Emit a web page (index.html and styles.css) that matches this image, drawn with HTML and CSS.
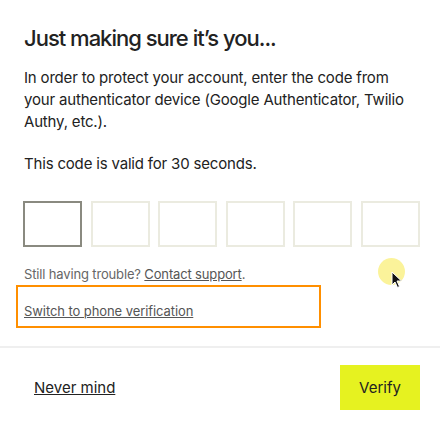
FILE: index.html
```html
<!DOCTYPE html>
<html lang="en">
<head>
    <meta charset="UTF-8">
    <meta name="viewport" content="width=device-width, initial-scale=1.0">
    <title>Verify it's you</title>
    <link rel="stylesheet" href="styles.css">
</head>
<body>
    <div class="dialog">
        <div class="content">
            <h1>Just making sure it’s you...</h1>
            <p class="intro">In order to protect your account, enter the code from your authenticator device (Google Authenticator, Twilio Authy, etc.).</p>
            <p class="valid">This code is valid for 30 seconds.</p>
            <div class="code-row">
                <input class="code-box active" maxlength="1">
                <input class="code-box" maxlength="1">
                <input class="code-box" maxlength="1">
                <input class="code-box" maxlength="1">
                <input class="code-box" maxlength="1">
                <input class="code-box" maxlength="1">
            </div>
            <p class="help">Still having trouble? <a href="#">Contact support</a>.</p>
            <div class="switch">
                <a href="#">Switch to phone verification</a>
            </div>
        </div>
        <div class="footer">
            <a class="cancel" href="#">Never mind</a>
            <button class="verify">Verify</button>
        </div>
    </div>
    <div class="cursor-dot"></div>
    <svg class="cursor" width="12" height="18" viewBox="0 0 12 18">
        <path d="M1 1 L1 14 L4 11 L6.5 16.5 L8.5 15.5 L6 10 L10.5 10 Z" fill="#111" stroke="#fff" stroke-width="1"/>
    </svg>
</body>
</html>
```

FILE: styles.css
```css
body {
    margin: 0;
    background: #fff;
    font-family: Inter, "Noto Sans", Arial, sans-serif;
    color: #222;
}
.content {
    padding: 24px 20px 18px 24px;
}
h1 {
    margin: 0 0 15px;
    font-size: 22px;
    line-height: 28px;
    font-weight: 450;
    letter-spacing: -1px;
}
.intro, .valid {
    margin: 0;
    font-size: 15px;
    line-height: 22px;
    letter-spacing: -0.18px;
}
.valid {
    margin-top: 20px;
}
.code-row {
    display: flex;
    gap: 8.6px;
    margin: 26px 0 0 -1px;
}
.code-box {
    width: 59px;
    height: 46px;
    box-sizing: border-box;
    border: 2px solid #ebebe0;
    border-radius: 0;
    padding: 0;
    outline: none;
}
.code-box.active {
    border-color: #8a8a80;
}
.help {
    margin: 17px 0 0;
    font-size: 13px;
    line-height: 20px;
    letter-spacing: -0.15px;
    color: #666;
}
.help a, .switch a {
    color: #555;
}
.switch {
    width: 305px;
    box-sizing: border-box;
    margin: 1px 0 0 -8px;
    padding: 14px 6px 5px;
    border: 2px solid #ff8f00;
    font-size: 13px;
    line-height: 20px;
    letter-spacing: -0.08px;
}
.footer {
    display: flex;
    justify-content: space-between;
    align-items: center;
    border-top: 2px solid #efefef;
    padding: 17px 20px 12px 34px;
}
.cancel {
    font-size: 15px;
    color: #222;
}
.verify {
    width: 80px;
    height: 45px;
    border: none;
    background: #e6f220;
    font-family: inherit;
    font-size: 15px;
    color: #222;
    cursor: pointer;
}
.cursor-dot {
    position: absolute;
    left: 378px;
    top: 258px;
    width: 27px;
    height: 27px;
    border-radius: 50%;
    background: #fbf28f;
    opacity: 0.9;
}
.cursor {
    position: absolute;
    left: 391px;
    top: 271px;
}
```
